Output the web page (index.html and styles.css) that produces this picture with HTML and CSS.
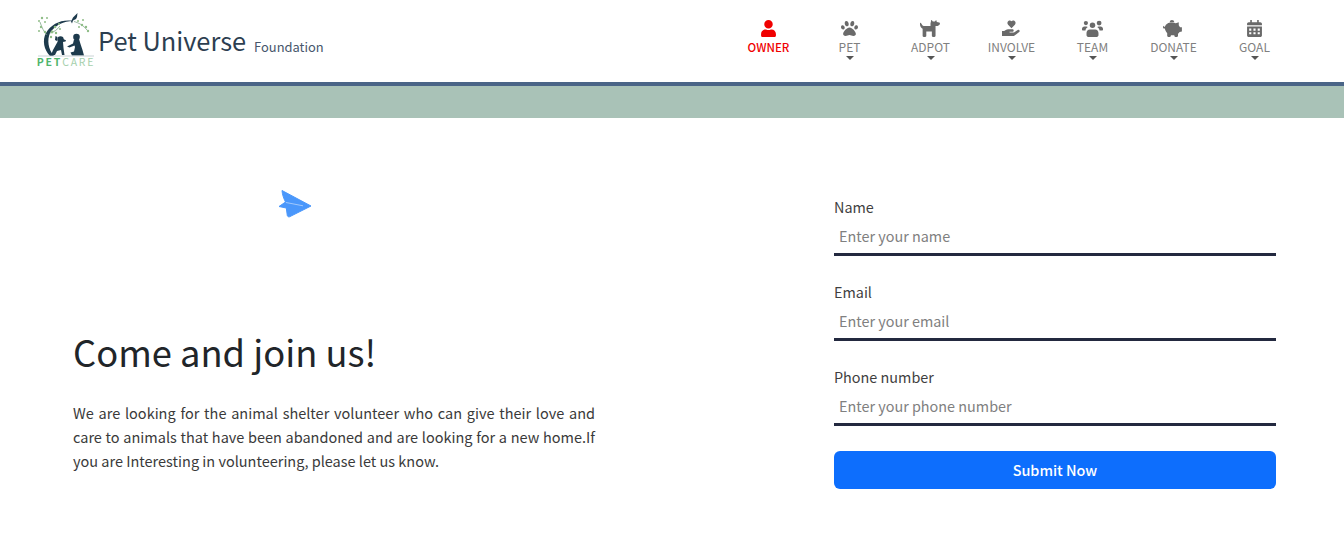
FILE: index.html
```html
<!DOCTYPE html>
<html lang="en">
<head>
<meta charset="utf-8">
<title>Pet Universe Foundation</title>
<link rel="stylesheet" href="styles.css">
</head>
<body>
<header class="header">
  <div class="brand">
    <div class="logo">
      <svg class="logo-art" viewBox="0 0 58 45" aria-hidden="true">
        <path d="M13 43C7 37 5 27 9 20C14 11 25 6 36 8C27 8 18 12 13 20C10 27 11 36 17 43Z" fill="#1d3a4c"/>
        <path d="M34 8.500l2-4 2-2 2.500-2.500-.5 4-1 2-3 1.500-1 3z" fill="#1d3a4c"/>
        <path d="M10 22C7 19 5 15 3 9M13 20C17 19 20 17 23 13M37 8.500C42 10 46 12 50 17" stroke="#6f9a7d" stroke-width=".7" fill="none"/>
        <circle cx="23.500" cy="26.500" r="3.200" fill="#1d3a4c"/>
        <path d="M20.500 24l-2-1-.5 4 2 1zM26 26l3 1.200-.5 1.300-3 .5z" fill="#1d3a4c"/>
        <path d="M21 28l5 1 .5 6 1 7h-2.500l-1-5-4 1-2 4h-4l2-5z" fill="#1d3a4c"/>
        <circle cx="39.500" cy="24" r="3.300" fill="#1d3a4c"/>
        <path d="M37 26.500l5-.5 1.500 5 2 6 1.500 5.500H35l-1.500-3 3.500-1 1-4.500-.5-1.500-5 2-2.500-1 6-3z" fill="#1d3a4c"/>
        <path d="M1 43h56" stroke="#bcc8cc" stroke-width=".8" fill="none"/>
        <g fill="#8fbd87">
          <circle cx="2" cy="8" r="1"/><circle cx="5" cy="5" r="1.200"/><circle cx="8" cy="9" r="1"/><circle cx="4" cy="14" r="1.200"/><circle cx="2" cy="18" r="1"/><circle cx="8" cy="19" r="1.200"/><circle cx="10" cy="5" r="1"/>
          <circle cx="18" cy="14" r="1.300"/><circle cx="22" cy="11" r="1"/><circle cx="15" cy="19" r="1.400"/><circle cx="19" cy="20" r="1.200"/><circle cx="14" cy="24" r="1.200"/><circle cx="23" cy="16" r="1"/>
          <circle cx="41" cy="8" r="1"/><circle cx="45" cy="12" r="1.200"/><circle cx="42" cy="14" r="1"/><circle cx="49" cy="14" r="1.200"/><circle cx="51" cy="18" r="1.200"/><circle cx="46" cy="7" r="1"/>
        </g>
      </svg>
      <div class="logo-text"><span class="logo-pet">PET</span><span class="logo-care">CARE</span></div>
    </div>
    <span class="brand-name">Pet Universe</span>
    <span class="brand-sub">Foundation</span>
  </div>
  <nav class="nav">
    <a class="nav-item nav-item-active">
      <svg class="nav-icon" viewBox="0 0 448 512"><path d="M224 256c70.700 0 128-57.300 128-128S294.700 0 224 0 96 57.300 96 128s57.300 128 128 128zm89.600 32h-16.700c-22.200 10.200-46.900 16-72.900 16s-50.600-5.800-72.900-16h-16.700C60.200 288 0 348.200 0 422.400V464c0 26.500 21.500 48 48 48h352c26.500 0 48-21.500 48-48v-41.600c0-74.200-60.200-134.400-134.400-134.400z"/></svg>
      <span>OWNER</span>
    </a>
    <a class="nav-item">
      <svg class="nav-icon" viewBox="0 0 512 512"><path d="M256 224c-79.410 0-192 122.760-192 200.250 0 34.900 26.810 55.750 71.740 55.750 48.840 0 81.090-25.080 120.260-25.080 39.510 0 71.850 25.080 120.260 25.080 44.930 0 71.740-20.850 71.740-55.750C448 346.760 335.410 224 256 224zm-147.280-12.610c-10.400-34.650-42.440-57.090-71.560-50.130-29.120 6.960-44.290 40.690-33.890 75.340 10.400 34.650 42.440 57.090 71.560 50.130 29.120-6.960 44.290-40.690 33.890-75.340zm84.720-20.780c30.940-8.140 46.420-49.940 34.580-93.360s-46.520-72.010-77.460-63.870-46.420 49.940-34.580 93.360c11.840 43.420 46.520 72.020 77.460 63.870zm281.390-29.340c-29.120-6.960-61.150 15.480-71.560 50.130-10.400 34.650 4.770 68.380 33.890 75.340 29.120 6.960 61.150-15.480 71.560-50.130 10.400-34.650-4.770-68.380-33.890-75.340zm-156.270 29.340c30.940 8.140 65.620-20.450 77.460-63.870 11.840-43.420-3.640-85.210-34.580-93.360s-65.620 20.450-77.460 63.870c-11.840 43.420 3.640 85.220 34.580 93.360z"/></svg>
      <span>PET</span><i class="caret"></i>
    </a>
    <a class="nav-item">
      <svg class="nav-icon nav-icon-wide" viewBox="0 0 20 16"><path d="M0 3.200C0 2.600.5 2.400.9 2.700l1.400 2.200c.3.5.7.7 1.300.7H10V3.200h0L10.600.3c.1-.4.5-.4.7-.1l.9 1.200h2l.8-1c.2-.3.600-.2.700.1l.3 1.300 2.200.4c.5.1.8.5.8.9 0 1.300-1 2.300-2.300 2.400l-1.900.2V15c0 .6-.4 1-1 1h-1.500c-.6 0-1-.4-1-1v-4.200H6V15c0 .6-.4 1-1 1H3.500c-.6 0-1-.4-1-1V8.200C1 7.500 0 6 0 4.300z"/></svg>
      <span>ADPOT</span><i class="caret"></i>
    </a>
    <a class="nav-item">
      <svg class="nav-icon nav-icon-wide" viewBox="0 0 20 17"><path d="M10 8.200L6.600 4.700C5.600 3.600 5.700 1.900 6.900 1c1-.8 2.400-.6 3.100.3C10.700.4 12.100.2 13.100 1c1.200.9 1.300 2.600.3 3.700z"/><path d="M.5 11h2.200l1.600-1.100c.7-.5 1.500-.7 2.300-.7h4.200c.8 0 1.400.5 1.400 1.200 0 .8-.6 1.300-1.300 1.300H8.400c-.3 0-.5.2-.5.4s.2.400.5.400h4.100l3.700-2.400c.6-.4 1.400-.3 1.800.3.400.6.200 1.300-.3 1.700l-4.600 3.300c-.5.400-1.100.500-1.700.500H.5z"/></svg>
      <span>INVOLVE</span><i class="caret"></i>
    </a>
    <a class="nav-item">
      <svg class="nav-icon nav-icon-wide" viewBox="0 0 20 16"><circle cx="3.700" cy="2.800" r="2"/><circle cx="16.300" cy="2.800" r="2.300"/><circle cx="10" cy="5" r="2.600"/><path d="M0 8.400C0 7 1 6 2.300 6h1.800c.6 0 1 .2 1.400.5C4.300 7.200 3.400 8.500 3.300 10H1c-.6 0-1-.4-1-1zM20 8.400C20 7 19 6 17.700 6h-1.800c-.6 0-1 .2-1.400.5 1.200.7 2.100 2 2.200 3.500H19c.6 0 1-.4 1-1zM7.500 9h5c1.900 0 3.200 1.500 3.200 3.400v2.100c0 .8-.7 1.500-1.500 1.500H5.800c-.8 0-1.500-.7-1.500-1.500v-2.100C4.300 10.500 5.600 9 7.500 9z"/></svg>
      <span>TEAM</span><i class="caret"></i>
    </a>
    <a class="nav-item">
      <svg class="nav-icon nav-icon-wide" viewBox="0 0 20 16"><path d="M8.500 0a2.300 2.300 0 0 1 2.300 2H6.300A2.300 2.300 0 0 1 8.500 0z"/><path d="M4 3.500c1.300-.8 2.800-1.100 4.500-1.100 1.300 0 2.600.2 3.700.7L15 2v3l1.200 1.800H18v4l-2.200.6c-.4.700-1 1.300-1.500 1.700V15c0 .6-.4 1-1 1h-1.500c-.5 0-1-.4-1-1v-.6H7.500v.6c0 .6-.4 1-1 1H5c-.5 0-1-.4-1-1v-2.400C2.700 11 2 9.500 1.800 8H1.200C.4 8 0 7.300 0 6.700s.4-1.200 1-1.300v1.100c.5 0 .8-.1 1-.6.400-1 1-1.800 2-2.400z"/></svg>
      <span>DONATE</span><i class="caret"></i>
    </a>
    <a class="nav-item">
      <svg class="nav-icon" viewBox="0 0 14 16"><path fill-rule="evenodd" d="M3 0h1.500v2h5V0H11v2h1.500C13.300 2 14 2.700 14 3.500V5H0V3.500C0 2.700.7 2 1.500 2H3zM0 6h14v8.500c0 .8-.7 1.500-1.500 1.500h-11C.7 16 0 15.300 0 14.500zm2 2v2h2V8zm4 0v2h2V8zm4 0v2h2V8zm-8 3.500v2h2v-2zm4 0v2h2v-2zm4 0v2h2v-2z"/></svg>
      <span>GOAL</span><i class="caret"></i>
    </a>
  </nav>
</header>
<div class="band"></div>
<main class="main">
  <section class="intro">
    <svg class="plane" viewBox="0 0 34 29" aria-hidden="true">
      <path d="M4 1.500L33 17 11.500 27.800C10.500 28 9.500 27.500 9.300 26.500L8.300 19 1 17.500 7.500 13C5.500 9 4.300 5.500 4 1.500Z" fill="#4a97fb" stroke="#4a97fb" stroke-linejoin="round"/>
      <path d="M8 13.500L25 16.800" stroke="#a9cdfc" stroke-width=".9" fill="none"/>
    </svg>
    <h1 class="intro-title">Come and join us!</h1>
    <p class="intro-text">We are looking for the animal shelter volunteer who can give their love and care to animals that have been abandoned and are looking for a new home.If you are Interesting in volunteering, please let us know.</p>
  </section>
  <form class="form">
    <label class="field">
      <span class="field-label">Name</span>
      <input class="field-input" type="text" placeholder="Enter your name">
    </label>
    <label class="field">
      <span class="field-label">Email</span>
      <input class="field-input" type="email" placeholder="Enter your email">
    </label>
    <label class="field">
      <span class="field-label">Phone number</span>
      <input class="field-input" type="tel" placeholder="Enter your phone number">
    </label>
    <button class="submit" type="button">Submit Now</button>
  </form>
</main>
</body>
</html>
```
FILE: styles.css
```css
* { box-sizing: border-box; }
html, body { margin: 0; padding: 0; }
body {
  background: #fff;
  color: #212529;
  font-family: "Noto Sans CJK SC", "Source Sans Pro", "Open Sans", sans-serif;
  font-size: 14.400px;
  line-height: 24px;
  overflow: hidden;
}
.header {
  height: 86px;
  border-bottom: 4px solid #4a6587;
  display: flex;
  justify-content: space-between;
  padding: 0 49px 0 37px;
}
.brand { display: flex; align-items: flex-start; }
.logo { width: 58px; padding-top: 13px; display: flex; flex-direction: column; align-items: center; }
.logo-art { width: 58px; height: 45px; display: block; }
.logo-text { font-size: 10.500px; line-height: 10px; letter-spacing: 1.800px; white-space: nowrap; margin-top: -1px; }
.logo-pet { color: #4fb56c; font-weight: 600; }
.logo-care { color: #a6d0ac; }
.brand-name { margin: 22px 0 0 3px; font-size: 25.400px; line-height: 36px; color: #2c3e50; }
.brand-sub { margin: 36px 0 0 8px; font-size: 12.900px; line-height: 22px; color: #47566b; }
.nav { display: flex; }
.nav-item {
  width: 81px;
  padding-top: 20px;
  display: flex;
  flex-direction: column;
  align-items: center;
  color: #808080;
  font-size: 12px;
  line-height: 16px;
  fill: #6a6a6a;
}
.nav-icon { height: 17px; width: 17px; display: block; margin-bottom: 2px; }
.nav-icon-wide { width: 21px; }
.nav-item-active { color: #f00000; fill: #f00000; font-weight: 500; font-size: 11.500px; }
.caret {
  width: 0;
  height: 0;
  margin-top: 1px;
  border-left: 4.500px solid transparent;
  border-right: 4.500px solid transparent;
  border-top: 4px solid #555;
}
.band { height: 32px; background: #a9c2b7; }
.main {
  display: flex;
  justify-content: space-between;
  padding: 71px 68px 0 73px;
}
.intro { width: 522px; }
.plane { display: block; width: 34px; height: 29px; margin-left: 205px; }
.intro-title { margin: 109px 0 0; font-size: 36.300px; line-height: 48px; font-weight: 400; color: #212529; }
.intro-text { margin: 26px 0 0; text-align: justify; color: #3a3a3a; font-size: 14.500px; }
.form { width: 442px; padding-top: 6px; display: flex; flex-direction: column; }
.field { display: flex; flex-direction: column; margin-bottom: 24px; }
.field-label { height: 25px; line-height: 24px; color: #3f3f3f; }
.field-input {
  height: 36px;
  border: 0;
  border-bottom: 3px solid #23293f;
  outline: 0;
  padding: 0 5px 3px;
  font: inherit;
  color: #333;
  background: transparent;
}
.field-input::placeholder { color: #808080; opacity: 1; }
.submit {
  height: 38px;
  margin-top: 1px;
  border: 0;
  border-radius: 6px;
  background: #0d6efd;
  color: #fff;
  font: inherit;
  font-weight: 500;
}
```
